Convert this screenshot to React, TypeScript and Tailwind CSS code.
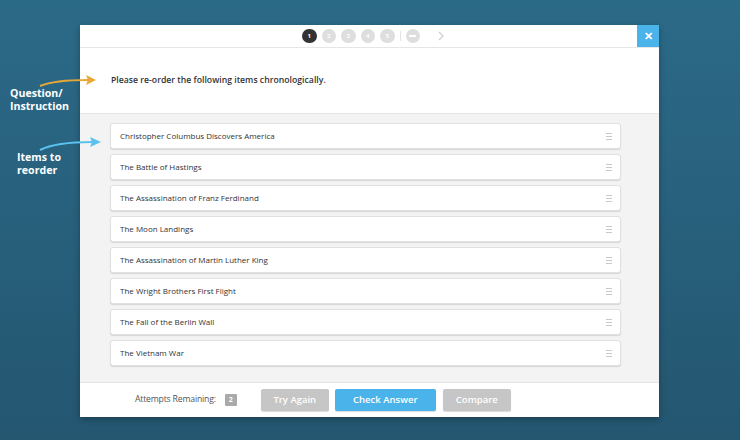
import React from 'react';

const items = [
    'Christopher Columbus Discovers America',
    'The Battle of Hastings',
    'The Assassination of Franz Ferdinand',
    'The Moon Landings',
    'The Assassination of Martin Luther King',
    'The Wright Brothers First Flight',
    'The Fall of the Berlin Wall',
    'The Vietnam War',
];

const Handle = () => (
    <div className="flex flex-col gap-[2px]">
        <span className="block h-px w-[6px] bg-[#c8c8c8]"></span>
        <span className="block h-px w-[6px] bg-[#c8c8c8]"></span>
        <span className="block h-px w-[6px] bg-[#c8c8c8]"></span>
    </div>
);

const Pager = () => (
    <div className="ml-[8px] flex items-center gap-[5px]">
        <span className="flex h-[14.5px] w-[14.5px] items-center justify-center rounded-full bg-[#333333] text-[6px] font-bold text-white">1</span>
        {['2', '3', '4', '5'].map(n => (
            <span key={n} className="flex h-[14.5px] w-[14.5px] items-center justify-center rounded-full bg-[#dedede] text-[6px] font-bold text-white">{n}</span>
        ))}
        <span className="block h-[10px] w-px bg-[#e2e2e2]"></span>
        <span className="flex h-[14.5px] w-[14.5px] items-center justify-center rounded-full bg-[#dedede]">
            <span className="block h-[2px] w-[7px] bg-white"></span>
        </span>
        <svg width="8" height="10" viewBox="0 0 8 10" className="ml-[12px]">
            <path d="M2 1 L6 5 L2 9" fill="none" stroke="#d0d0d0" strokeWidth="1.3"/>
        </svg>
    </div>
);

export default function App() {
    return (
        <div className="relative h-[440px] w-[740px] overflow-hidden bg-gradient-to-b from-[#2b6a88] to-[#245670] font-['Open_Sans',sans-serif]">
            {/* modal */}
            <div className="absolute left-[80px] top-[25px] flex h-[392px] w-[579px] flex-col bg-white shadow-[0_2px_6px_rgba(0,0,0,0.3)]">
                <div className="flex h-[23px] items-center justify-center border-b border-[#e6e6e6]">
                    <Pager/>
                    <button className="absolute right-0 top-0 flex h-[22px] w-[22px] items-center justify-center bg-[#4ab3ea] text-[11px] font-bold text-white">
                        ✕
                    </button>
                </div>
                <div className="flex h-[66px] items-center border-b border-[#e6e6e6] pl-[31px]">
                    <p className="text-[8.7px] font-semibold text-[#333333]">Please re-order the following items chronologically.</p>
                </div>
                <div className="flex flex-1 flex-col gap-[5px] bg-[#f3f3f3] pl-[30px] pr-[38px] pt-[9px]">
                    {items.map(item => (
                        <div key={item} className="flex h-[26px] items-center justify-between rounded-[3px] border border-[#e0e0e0] bg-white pl-[9px] pr-[8px] shadow-[0_1px_1px_rgba(0,0,0,0.12)]">
                            <span className="text-[8px] text-[#333333]">{item}</span>
                            <Handle/>
                        </div>
                    ))}
                </div>
                <div className="flex h-[35px] items-center border-t border-[#e3e3e3] pl-[55px]">
                    <span className="text-[8.7px] tracking-[-0.2px] text-[#555555]">Attempts Remaining:</span>
                    <span className="ml-[9px] flex h-[12px] w-[12px] items-center justify-center rounded-[1px] bg-[#aaaaaa] text-[7px] font-bold text-white">2</span>
                    <button className="ml-[24px] h-[22px] w-[68px] rounded-[2px] bg-[#c6c6c6] text-[9.5px] font-semibold text-white shadow-[0_1px_1px_rgba(0,0,0,0.15)]">Try Again</button>
                    <button className="ml-[6px] h-[22px] w-[101px] rounded-[2px] bg-[#4ab3ea] text-[9.5px] font-semibold text-white shadow-[0_1px_1px_rgba(0,0,0,0.15)]">Check Answer</button>
                    <button className="ml-[7px] h-[22px] w-[68px] rounded-[2px] bg-[#c6c6c6] text-[9.5px] font-semibold text-white shadow-[0_1px_1px_rgba(0,0,0,0.15)]">Compare</button>
                </div>
            </div>

            {/* annotations */}
            <div className="absolute left-[10px] top-[87px] text-[10.6px] font-bold leading-[13px] text-white">
                Question/<br/>Instruction
            </div>
            <svg className="absolute left-[36px] top-[72px]" width="64" height="16" viewBox="0 0 64 16">
                <path d="M4 14 C16 9 32 8 52 8" fill="none" stroke="#e8a838" strokeWidth="2.2"/>
                <path d="M50 3 L60 8 L50 13 L52 8 Z" fill="#e8a838"/>
            </svg>
            <div className="absolute left-[17px] top-[151px] text-[10.6px] font-bold leading-[13px] text-white">
                Items to<br/>reorder
            </div>
            <svg className="absolute left-[36px] top-[134px]" width="68" height="18" viewBox="0 0 68 18">
                <path d="M4 16 C16 10 34 8 56 8" fill="none" stroke="#5bc2f0" strokeWidth="2.2"/>
                <path d="M54 3 L65 8 L54 13 L56 8 Z" fill="#5bc2f0"/>
            </svg>
        </div>
    );
}
